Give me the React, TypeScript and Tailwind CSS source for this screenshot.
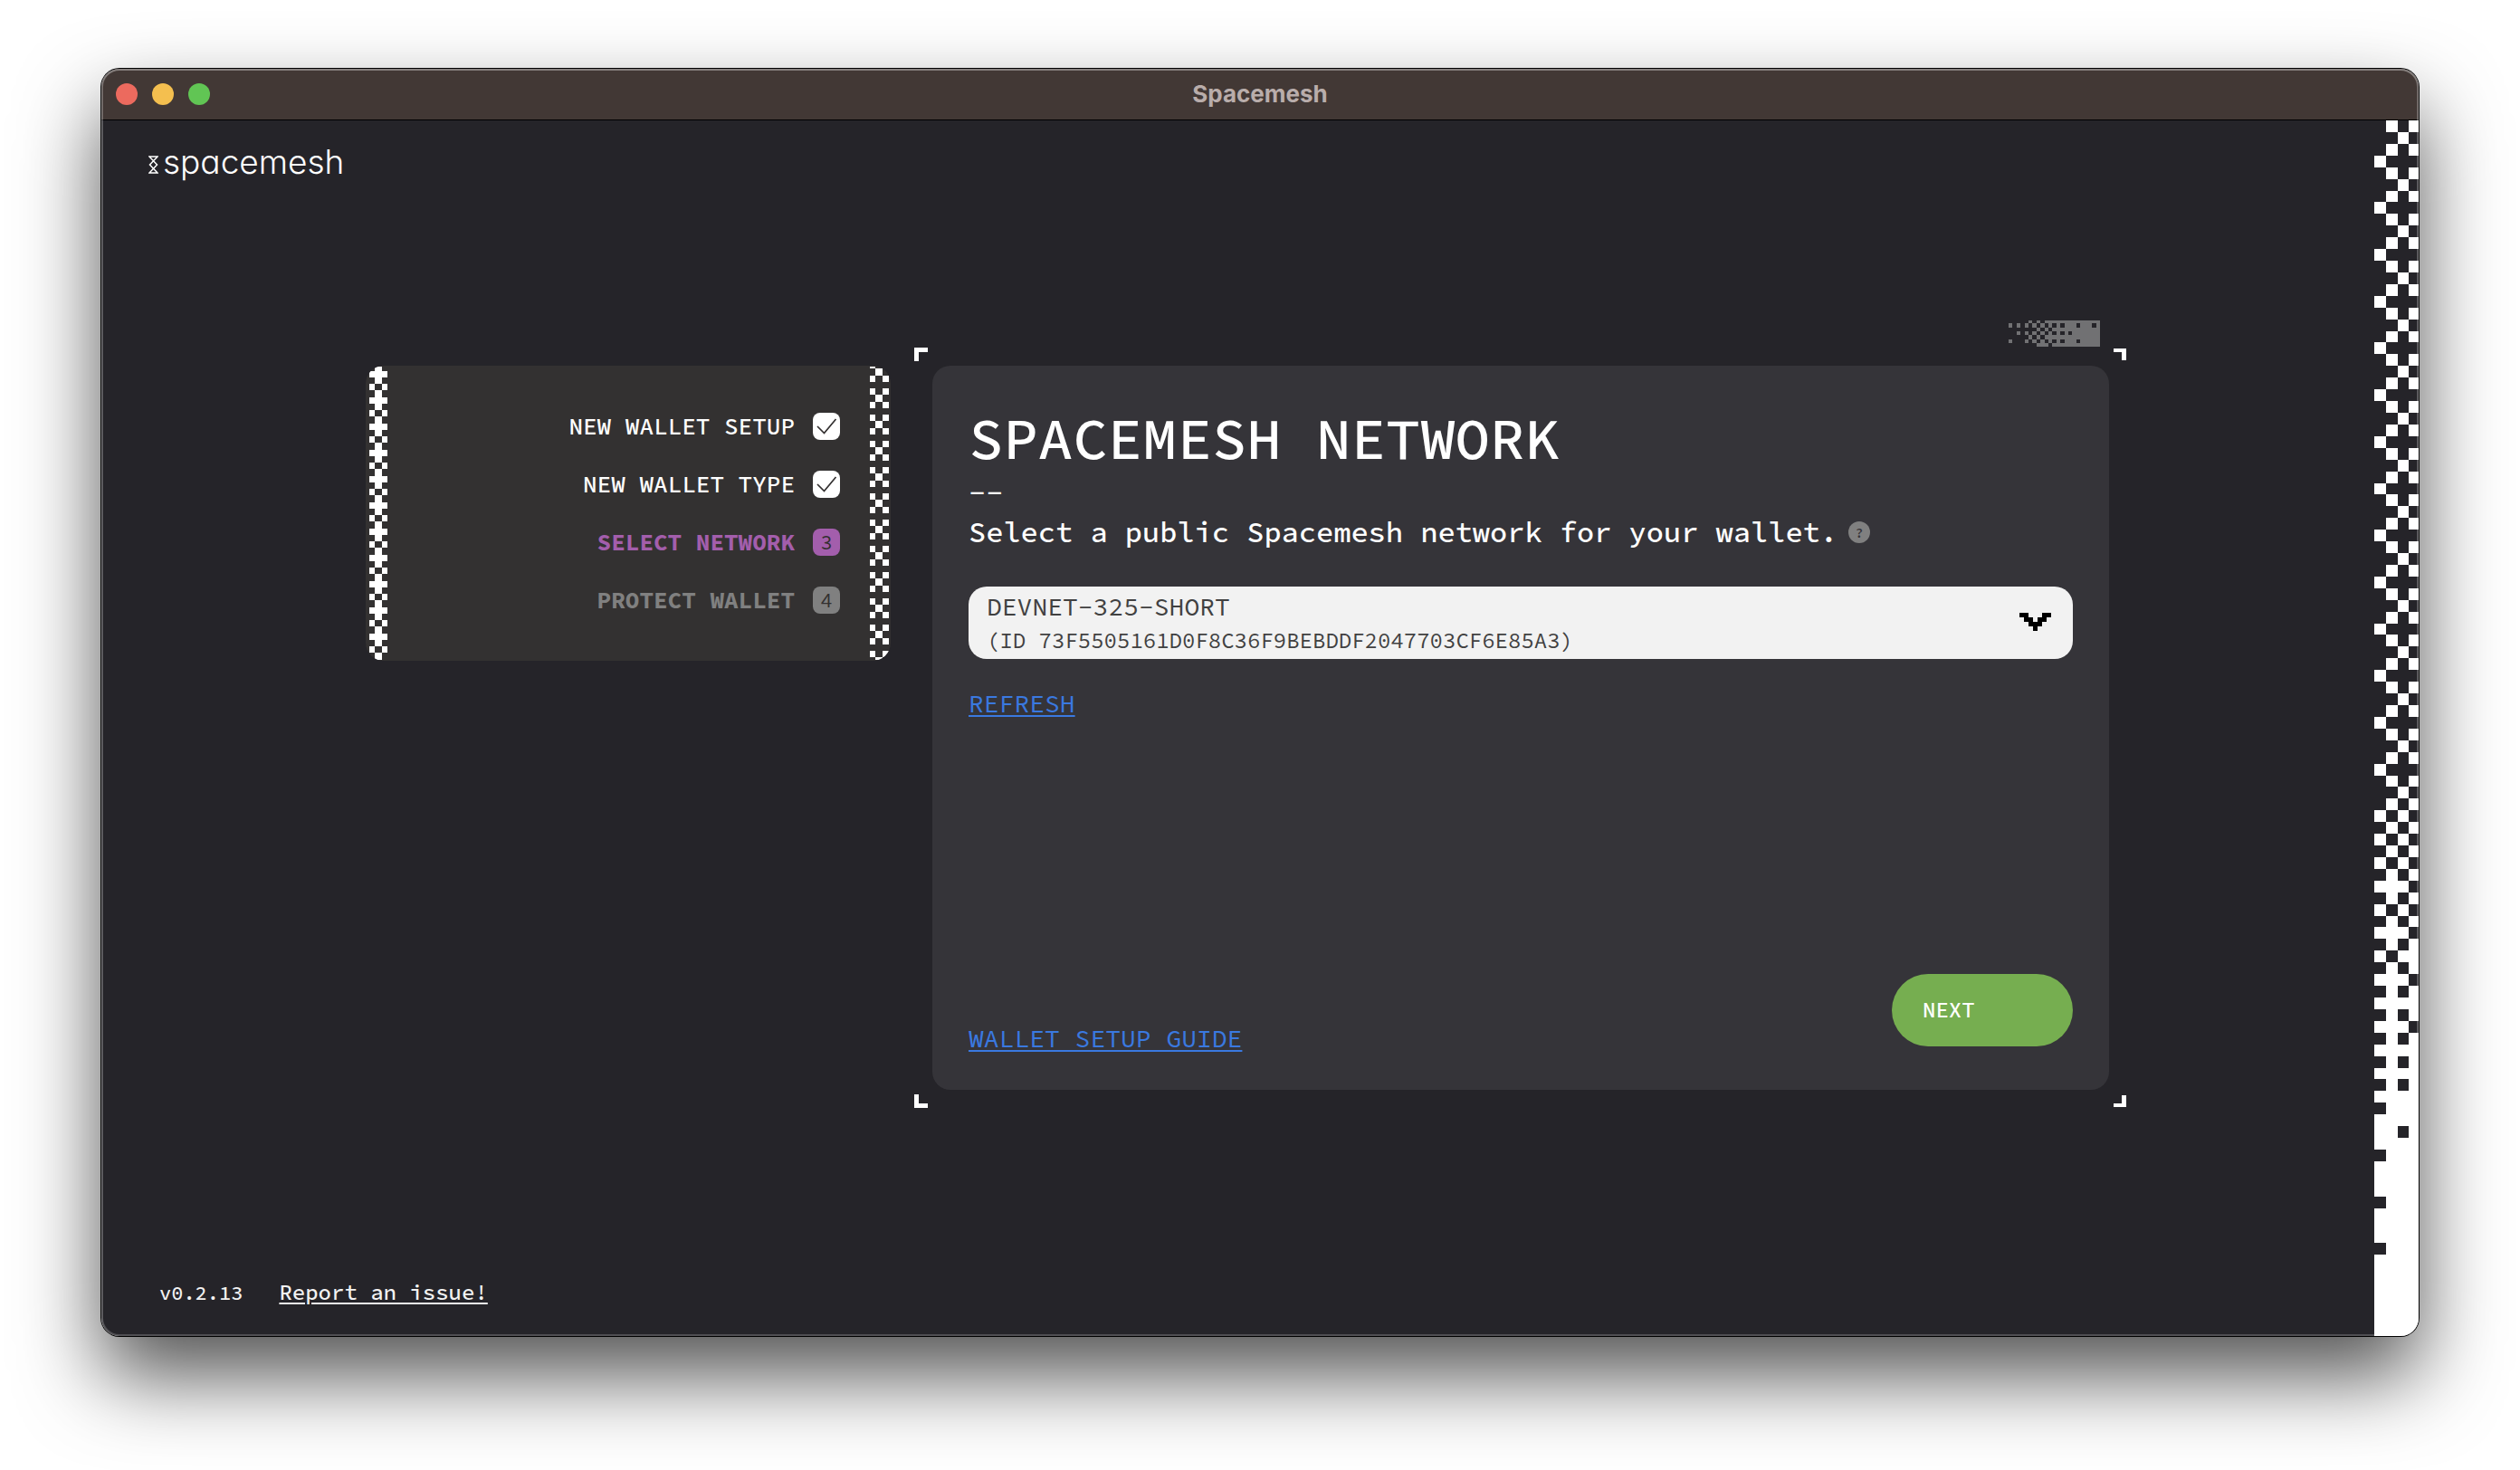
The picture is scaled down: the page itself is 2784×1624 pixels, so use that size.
import type { ReactNode } from "react";

const MONO = 'font-["Source_Code_Pro","Liberation_Mono",monospace]';

/* White cells of the window's right-hand pixel border, one string per row. */
const REPEAT_ROWS = [".x.x", "..x.", ".x.x", "x..."];
const BLEND_ROWS = [
  ".x.x", "..x.", ".x.x", "x.x.", ".x.x", "x.x.", ".x.x", "x.x.",
  ".x.x", "xxx.", ".x.x", "x.x.", ".x.x", "xxx.", ".x.x", "x.xx",
  ".x.x", "xxx.", ".x.x", "xxxx", ".x.x", "xxx.", ".x.x", "xxxx",
  ".x.x", "xxxx", ".x.x", "xxxx", ".xxx", "xxxx", "xx.x", "xxxx",
  ".xxx", "xxxx", "xxxx", "xxxx", ".xxx", "xxxx", "xxxx", "xxxx",
  ".xxx", "xxxx", "xxxx", "xxxx", "xxxx", "xxxx", "xxxx", "xxxx", "xxxx",
];
const EDGE_ROWS = [
  ...Array.from({ length: 56 }, (_, i) => REPEAT_ROWS[i % 4]),
  ...BLEND_ROWS,
];

const DITHER_ROWS = [
  ".....x.x.xxxxxxxxxxxxxx",
  "x.x.x.x.x.x.x.xxx.xxx.x",
  ".......x.x.xxxxxxxxxxxx",
  "..x.x.x.x.x.x.x.xxxxxxx",
  ".....x.x.xxxxxxxxxxxxxx",
  "x...x.x.x.x.x.xxx.xxxxx",
  ".......xxx.xxxxxxxxxxxx",
];

const CHEVRON_ROWS = ["xx...xx", ".xx.xx.", "..xxx..", "...x..."];

function cells(rows: string[], w: number, h: number) {
  return rows
    .flatMap((row, y) =>
      [...row].map((c, x) => (c === "x" ? `M${x * w} ${y * h}h${w}v${h}h${-w}z` : "")),
    )
    .join("");
}

function EdgePattern() {
  return (
    <div className="relative w-[49px] shrink-0 overflow-hidden" aria-hidden="true">
      <svg
        className="absolute inset-0 size-full fill-white"
        viewBox="0 0 49 1343"
        preserveAspectRatio="none"
        shapeRendering="crispEdges"
      >
        <path d={cells(EDGE_ROWS, 12.8, 12.92)} />
      </svg>
    </div>
  );
}

function Dither() {
  return (
    <svg
      className="absolute right-[10px] bottom-full mb-[21px] h-[29px] w-[101px] fill-[#717173]"
      viewBox="0 1 101 29"
      preserveAspectRatio="none"
      shapeRendering="crispEdges"
      aria-hidden="true"
    >
      <path d={cells(DITHER_ROWS, 4.4, 4.3)} />
    </svg>
  );
}

function Hourglass() {
  return (
    <svg className="h-5 w-[11px]" viewBox="0 0 11 20" fill="none" stroke="white" strokeWidth="1.5" aria-hidden="true">
      <path d="M1 1h9L1.5 10 10 19H1L9.5 10Z" />
    </svg>
  );
}

function StepsPatternLeft() {
  return (
    <svg className="absolute top-px bottom-px left-1 h-[calc(100%-2px)] w-5" shapeRendering="crispEdges" aria-hidden="true">
      <defs>
        <pattern id="crosses" width="20" height="29" y="-3" patternUnits="userSpaceOnUse">
          <path fill="white" d="M6 0h8v22h-8zM0 8h20v7h-20zM0 22h6v7h-6zM14 22h6v7h-6z" />
        </pattern>
      </defs>
      <rect width="20" height="100%" fill="url(#crosses)" />
    </svg>
  );
}

function StepsPatternRight() {
  return (
    <svg className="absolute top-px right-0.5 bottom-px h-[calc(100%-2px)] w-[21px]" shapeRendering="crispEdges" aria-hidden="true">
      <defs>
        <pattern id="diagonals" width="21" height="29" y="-5" patternUnits="userSpaceOnUse">
          <path fill="white" d="M0 0h6v7h-6zM14 0h7v7h-7zM6 7h8v8h-8zM0 15h6v7h-6zM14 15h7v7h-7z" />
        </pattern>
      </defs>
      <rect width="21" height="100%" fill="url(#diagonals)" />
    </svg>
  );
}

function Step({ label, color, badge, children }: { label: string; color: string; badge: string; children: ReactNode }) {
  return (
    <li className={`flex h-8 items-center justify-end gap-5 text-[26px] leading-8 ${color}`}>
      <span>{label}</span>
      <span className={`flex size-[30px] items-center justify-center rounded-lg text-[22px] font-normal text-[#333030] ${badge}`}>
        {children}
      </span>
    </li>
  );
}

function Check() {
  return (
    <svg className="size-[30px]" viewBox="0 0 30 30" fill="none" stroke="#333030" strokeWidth="1.7" role="img" aria-label="done">
      <path d="M5 15l7.500 7.500L25.500 7" />
    </svg>
  );
}

function Corners() {
  return (
    <div className="pointer-events-none" aria-hidden="true">
      <span className="absolute -top-5 -left-5 size-[15px] border-t-[5px] border-l-[5px] border-white" />
      <span className="absolute -top-[19px] -right-[19px] h-[13px] w-[14px] border-t-[4px] border-r-[5px] border-white" />
      <span className="absolute -bottom-5 -left-5 size-[15px] border-b-[5px] border-l-[5px] border-white" />
      <span className="absolute -right-[19px] -bottom-[19px] h-[13px] w-[14px] border-r-[5px] border-b-[4px] border-white" />
    </div>
  );
}

export default function App() {
  return (
    <div className="flex min-h-screen flex-col bg-white px-28 pt-[76px] pb-[148px]">
      <div className="relative flex flex-1 flex-col rounded-[20px] shadow-[0_0_0_1px_#000,0_44px_90px_rgba(0,0,0,0.68)]">
        <div className="flex flex-1 flex-col overflow-hidden rounded-[20px] bg-[#252429]">
          <div className="grid h-[57px] grid-cols-[1fr_auto_1fr] items-center border-b border-black bg-[#423835] px-4">
            <div className="flex gap-4">
              <button aria-label="Close" className="size-6 rounded-full bg-[#ec6a5e]" />
              <button aria-label="Minimize" className="size-6 rounded-full bg-[#f4bf4f]" />
              <button aria-label="Zoom" className="size-6 rounded-full bg-[#61c554]" />
            </div>
            <span className='font-["Inter",sans-serif] text-[26px] leading-8 font-bold text-[#b9adab]'>Spacemesh</span>
          </div>

          <div className="flex flex-1">
            <div className={`grid min-w-0 flex-1 grid-rows-[1fr_auto_1fr] font-medium text-white ${MONO}`}>
              <header className="flex items-baseline gap-[5px] self-start pt-[26px] pl-[52px]">
                <Hourglass />
                <span className={`font-["Inter",sans-serif] text-[37px] leading-10 font-light [font-feature-settings:"cv11"]`}>
                  spacemesh
                </span>
              </header>

              <main className="flex items-start justify-center gap-[46px] pr-px pb-px">
                <aside className="relative w-[580px] overflow-hidden rounded-[20px] bg-[#333131] py-[51px] pr-14">
                  <StepsPatternLeft />
                  <StepsPatternRight />
                  <ol className="flex flex-col gap-8">
                    <Step label="NEW WALLET SETUP" color="text-white" badge="bg-white">
                      <Check />
                    </Step>
                    <Step label="NEW WALLET TYPE" color="text-white" badge="bg-white">
                      <Check />
                    </Step>
                    <Step label="SELECT NETWORK" color="font-bold text-[#a35eac]" badge="bg-[#a35eac]">
                      3
                    </Step>
                    <Step label="PROTECT WALLET" color="font-bold text-[#808080]" badge="bg-[#808080]">
                      4
                    </Step>
                  </ol>
                </aside>

                <section className="relative w-[1300px]">
                  <Dither />
                  <Corners />
                  <div className="flex min-h-[800px] flex-col rounded-[20px] bg-[#353439] p-10">
                    <h1 className="text-[64px] leading-[80px]">SPACEMESH NETWORK</h1>
                    <p className="text-[32px] leading-10">--</p>
                    <div className="flex items-center gap-3">
                      <p className="text-[32px] leading-[48px]">Select a public Spacemesh network for your wallet.</p>
                      <button
                        aria-label="Help"
                        className="flex size-6 items-center justify-center rounded-full bg-[#808080] text-base leading-6 text-[#353439]"
                      >
                        ?
                      </button>
                    </div>

                    <div className="relative mt-9 font-normal text-[#414141]">
                      <select
                        aria-label="Network"
                        className="h-20 w-full appearance-none rounded-[20px] bg-[#f2f2f2] pr-20 pb-9 pl-5 text-[28px]"
                      >
                        <option>DEVNET-325-SHORT</option>
                      </select>
                      <span className="pointer-events-none absolute top-11 left-5 text-[24px] leading-8">
                        (ID 73F5505161D0F8C36F9BEBDDF2047703CF6E85A3)
                      </span>
                      <svg
                        className="pointer-events-none absolute top-[29px] right-6 h-5 w-[35px] fill-black"
                        viewBox="0 0 35 20"
                        shapeRendering="crispEdges"
                        aria-hidden="true"
                      >
                        <path d={cells(CHEVRON_ROWS, 5, 5)} />
                      </svg>
                    </div>

                    <a
                      href="#refresh"
                      className="mt-8 self-start text-[28px] leading-[34px] font-normal text-[#3a79e0] underline decoration-2 underline-offset-[3px]"
                    >
                      REFRESH
                    </a>

                    <div className="mt-auto flex items-end justify-between">
                      <a
                        href="#guide"
                        className="text-[28px] leading-[34px] font-normal text-[#3a79e0] underline decoration-2 underline-offset-[3px]"
                      >
                        WALLET SETUP GUIDE
                      </a>
                      <button className="mb-2 h-20 w-[200px] rounded-full bg-[#76ae50] pl-[34px] text-left text-[24px]">
                        NEXT
                      </button>
                    </div>
                  </div>
                </section>
              </main>

              <footer className="flex items-baseline gap-10 self-end pb-8 pl-16 text-[#f2f2f2]">
                <span className="text-[22px] leading-8">v0.2.13</span>
                <a href="#report" className="text-[24px] leading-8 underline decoration-2 underline-offset-[3px]">
                  Report an issue!
                </a>
              </footer>
            </div>
            <EdgePattern />
          </div>
        </div>
        <div
          className="pointer-events-none absolute inset-0 rounded-[20px] shadow-[inset_0_0_0_2px_rgba(255,255,255,0.2),inset_0_1px_0_1px_rgba(255,255,255,0.2)]"
          aria-hidden="true"
        />
      </div>
    </div>
  );
}
